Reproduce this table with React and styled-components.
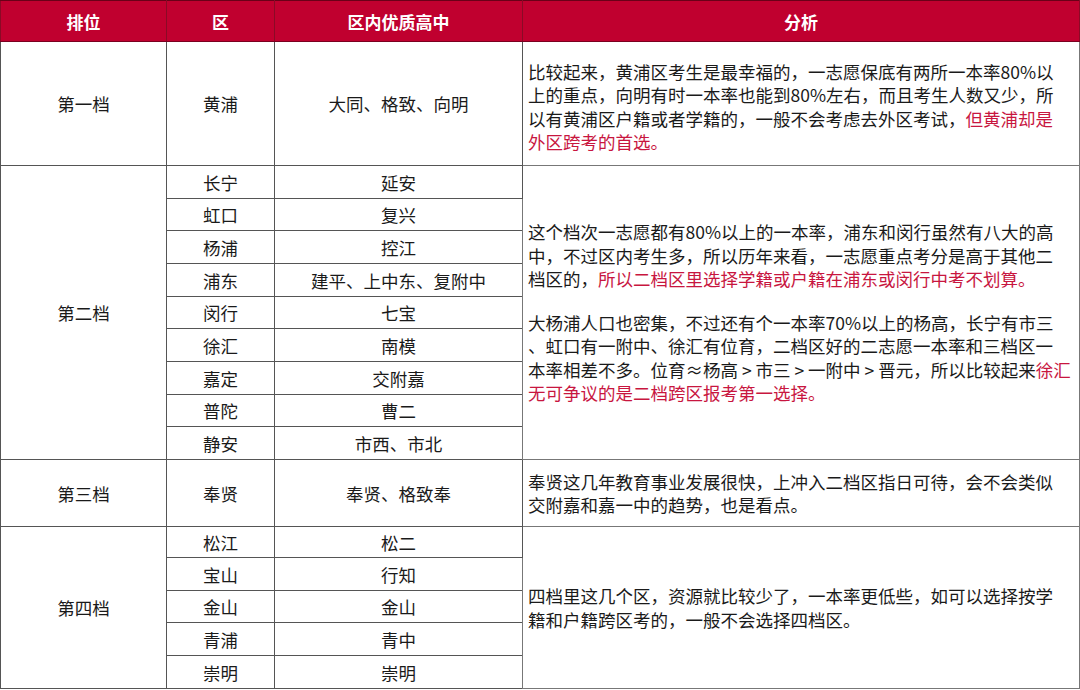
import React from "react";
import styled, { createGlobalStyle } from "styled-components";

const Global = createGlobalStyle`
  html, body { margin: 0; padding: 0; background: #ffffff; }
  body { font-family: "Noto Sans CJK SC", "Noto Sans", sans-serif; }
`;

const Table = styled.table`
  border-collapse: collapse;
  table-layout: fixed;
  width: 1079px;
  font-family: "Noto Sans CJK SC", "Noto Sans", sans-serif;
  font-size: 17.5px;
  color: #1a1a1a;
  border-left: 1px solid #333333;
  border-right: 1px solid #888888;
  border-bottom: 1px solid #888888;
`;

const HeadRow = styled.tr`
  height: 41px;
  background: #c0002f;
`;

const Th = styled.th`
  color: #ffffff;
  font-weight: 700;
  font-size: 17px;
  text-align: center;
  vertical-align: middle;
  padding: 0;
  border: 1px solid #8a0a26;
  border-top: 1px solid #6a0018;
  border-bottom: 1px solid #7a0020;
`;

const Row = styled.tr`
  height: ${(p) => p.$h}px;
`;

const Td = styled.td`
  text-align: center;
  vertical-align: middle;
  padding: 0;
  border: 1px solid #555555;
  line-height: 1.2;
`;

const Note = styled.td`
  text-align: left;
  vertical-align: middle;
  padding: ${(p) => (p.$shift ? "6px 2px 0 5px" : "0 2px 0 5px")};
  border: 1px solid #777777;
  line-height: 23.5px;
`;

const Para = styled.div`
  & + & {
    margin-top: 20px;
  }
`;

const Line = styled.span`
  display: block;
  white-space: nowrap;
`;

const Red = styled.span`
  color: #c8163f;
`;

const tier2 = [
  ["长宁", "延安"],
  ["虹口", "复兴"],
  ["杨浦", "控江"],
  ["浦东", "建平、上中东、复附中"],
  ["闵行", "七宝"],
  ["徐汇", "南模"],
  ["嘉定", "交附嘉"],
  ["普陀", "曹二"],
  ["静安", "市西、市北"],
];
const tier2H = [33, 32, 33, 33, 32, 33, 33, 32, 33];

const tier4 = [
  ["松江", "松二"],
  ["宝山", "行知"],
  ["金山", "金山"],
  ["青浦", "青中"],
  ["崇明", "崇明"],
];
const tier4H = [31, 33, 32, 33, 33];

export default function App() {
  return (
    <>
      <Global />
      <Table>
        <colgroup>
          <col style={{ width: 166 }} />
          <col style={{ width: 108 }} />
          <col style={{ width: 248 }} />
          <col style={{ width: 557 }} />
        </colgroup>
        <thead>
          <HeadRow>
            <Th>排位</Th>
            <Th>区</Th>
            <Th>区内优质高中</Th>
            <Th>分析</Th>
          </HeadRow>
        </thead>
        <tbody>
          <Row $h={124}>
            <Td>第一档</Td>
            <Td>黄浦</Td>
            <Td>大同、格致、向明</Td>
            <Note $shift>
              <Line>比较起来，黄浦区考生是最幸福的，一志愿保底有两所一本率80%以</Line>
              <Line>上的重点，向明有时一本率也能到80%左右，而且考生人数又少，所</Line>
              <Line>
                以有黄浦区户籍或者学籍的，一般不会考虑去外区考试，<Red>但黄浦却是</Red>
              </Line>
              <Line>
                <Red>外区跨考的首选。</Red>
              </Line>
            </Note>
          </Row>
          {tier2.map(([d, s], i) => (
            <Row key={d} $h={tier2H[i]}>
              {i === 0 && <Td rowSpan={9}>第二档</Td>}
              <Td>{d}</Td>
              <Td>{s}</Td>
              {i === 0 && (
                <Note rowSpan={9}>
                  <Para>
                    <Line>这个档次一志愿都有80%以上的一本率，浦东和闵行虽然有八大的高</Line>
                    <Line>中，不过区内考生多，所以历年来看，一志愿重点考分是高于其他二</Line>
                    <Line>
                      档区的，<Red>所以二档区里选择学籍或户籍在浦东或闵行中考不划算。</Red>
                    </Line>
                  </Para>
                  <Para>
                    <Line>大杨浦人口也密集，不过还有个一本率70%以上的杨高，长宁有市三</Line>
                    <Line>、虹口有一附中、徐汇有位育，二档区好的二志愿一本率和三档区一</Line>
                    <Line>
                      本率相差不多。位育≈杨高 &gt; 市三 &gt; 一附中 &gt; 晋元，所以比较起来<Red>徐汇</Red>
                    </Line>
                    <Line>
                      <Red>无可争议的是二档跨区报考第一选择。</Red>
                    </Line>
                  </Para>
                </Note>
              )}
            </Row>
          ))}
          <Row $h={67}>
            <Td>第三档</Td>
            <Td>奉贤</Td>
            <Td>奉贤、格致奉</Td>
            <Note>
              <Line>奉贤这几年教育事业发展很快，上冲入二档区指日可待，会不会类似</Line>
              <Line>交附嘉和嘉一中的趋势，也是看点。</Line>
            </Note>
          </Row>
          {tier4.map(([d, s], i) => (
            <Row key={d} $h={tier4H[i]}>
              {i === 0 && <Td rowSpan={5}>第四档</Td>}
              <Td>{d}</Td>
              <Td>{s}</Td>
              {i === 0 && (
                <Note rowSpan={5}>
                  <Line>四档里这几个区，资源就比较少了，一本率更低些，如可以选择按学</Line>
                  <Line>籍和户籍跨区考的，一般不会选择四档区。</Line>
                </Note>
              )}
            </Row>
          ))}
        </tbody>
      </Table>
    </>
  );
}
